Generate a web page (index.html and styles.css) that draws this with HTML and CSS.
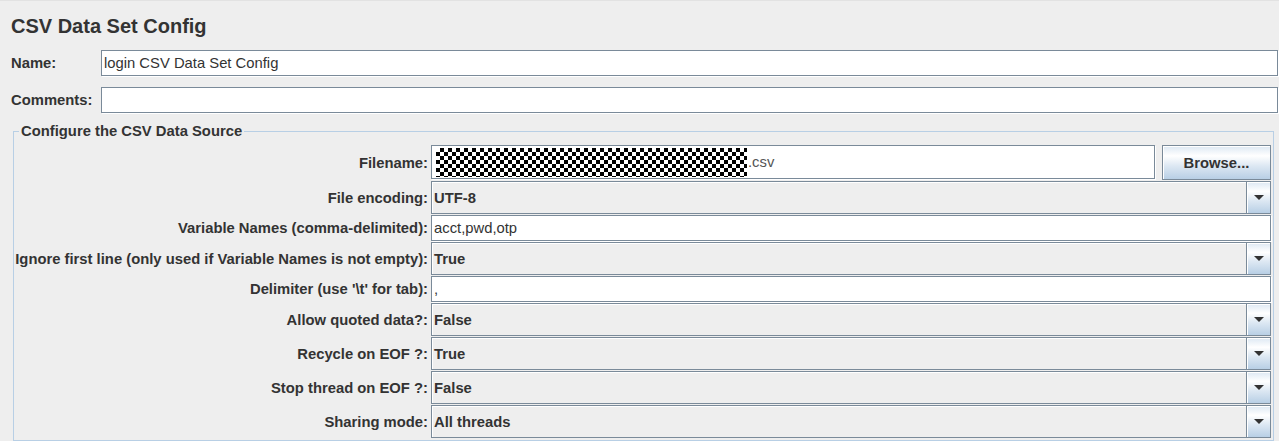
FILE: index.html
```html
<!DOCTYPE html>
<html>
<head>
<meta charset="utf-8">
<link rel="stylesheet" href="styles.css">
</head>
<body>
<div class="page">
  <h1 class="title">CSV Data Set Config</h1>
  <div class="toprow">
    <div class="toplabel">Name:</div>
    <div class="tf">login CSV Data Set Config</div>
  </div>
  <div class="toprow second">
    <div class="toplabel">Comments:</div>
    <div class="tf"></div>
  </div>
  <fieldset class="group">
    <legend class="legend">Configure the CSV Data Source</legend>
    <div class="form">
      <div class="lbl">Filename:</div>
      <div class="filerow">
        <div class="tf file"><span class="redact"></span><span>.csv</span></div>
        <div class="btn">Browse...</div>
      </div>

      <div class="lbl">File encoding:</div>
      <div class="combo"><span class="val">UTF-8</span><span class="arrow"><span class="tri"></span></span></div>

      <div class="lbl">Variable Names (comma-delimited):</div>
      <div class="tf small">acct,pwd,otp</div>

      <div class="lbl">Ignore first line (only used if Variable Names is not empty):</div>
      <div class="combo"><span class="val">True</span><span class="arrow"><span class="tri"></span></span></div>

      <div class="lbl">Delimiter (use '\t' for tab):</div>
      <div class="tf small">,</div>

      <div class="lbl">Allow quoted data?:</div>
      <div class="combo"><span class="val">False</span><span class="arrow"><span class="tri"></span></span></div>

      <div class="lbl">Recycle on EOF ?:</div>
      <div class="combo"><span class="val">True</span><span class="arrow"><span class="tri"></span></span></div>

      <div class="lbl">Stop thread on EOF ?:</div>
      <div class="combo"><span class="val">False</span><span class="arrow"><span class="tri"></span></span></div>

      <div class="lbl">Sharing mode:</div>
      <div class="combo"><span class="val">All threads</span><span class="arrow"><span class="tri"></span></span></div>
    </div>
  </fieldset>
</div>
</body>
</html>
```

FILE: styles.css
```css
html, body {
  margin: 0;
  padding: 0;
  height: 100%;
  overflow: hidden;
  background: #eeeeee;
}

.page {
  box-sizing: border-box;
  height: 441px;
  border-top: 1px solid #e2e2e2;
  padding: 0 1px 0 0;
  font-family: "Liberation Sans", Arial, sans-serif;
  font-size: 14.8px;
  color: #333333;
}

.title {
  margin: 14px 0 0 11px;
  font-size: 20px;
  line-height: 23px;
  font-weight: bold;
  color: #333333;
}

.toprow {
  display: flex;
  height: 26px;
  margin-top: 12px;
  padding-left: 11px;
}

.toprow.second {
  margin-top: 11px;
}

.toplabel {
  width: 90px;
  display: flex;
  align-items: center;
  font-weight: bold;
  white-space: nowrap;
}

.tf {
  box-sizing: border-box;
  flex: 1;
  display: flex;
  align-items: center;
  background: #ffffff;
  border: 1px solid #7a8a99;
  box-shadow: 1px 1px 0 #ffffff;
  padding-left: 2px;
  white-space: nowrap;
  overflow: hidden;
}

.group {
  margin: 10px 4px 0 13px;
  padding: 0 2px 2px 0;
  border: 1px solid #b8cfe5;
  min-width: 0;
}

.legend {
  margin-left: 5px;
  padding: 0 2px;
  font-weight: bold;
  line-height: 17px;
  white-space: nowrap;
}

.form {
  display: grid;
  grid-template-columns: 414px 1fr;
  grid-template-rows: 35px 33px 26px 33px 26px 33px 33px 33px 33px;
  column-gap: 3px;
  row-gap: 1px;
  padding-top: 5px;
}

.lbl {
  display: flex;
  align-items: center;
  justify-content: flex-end;
  font-weight: bold;
  white-space: nowrap;
}

.filerow {
  display: flex;
  gap: 7px;
  min-width: 0;
}

.tf.file {
  height: 34px;
  padding-left: 4px;
  color: #555555;
}

.redact {
  display: inline-block;
  flex: none;
  width: 311px;
  height: 29px;
  margin-right: 1px;
  background-color: #ffffff;
  background-image: conic-gradient(#000 25%, #fff 0 50%, #000 0 75%, #fff 0);
  background-size: 8px 8px;
}

.btn {
  box-sizing: border-box;
  width: 109px;
  height: 35px;
  display: flex;
  align-items: center;
  justify-content: center;
  font-weight: bold;
  border: 1px solid #7a8a99;
  box-shadow: inset 1px 1px 0 #ffffff;
  background: linear-gradient(#dde8f3 0%, #ffffff 30%, #dde8f3 60%, #b8cfe5 100%);
}

.combo {
  box-sizing: border-box;
  display: flex;
  align-items: stretch;
  border: 1px solid #7a8a99;
  box-shadow: inset 1px 1px 0 #ffffff;
  background: #eeeeee;
}

.val {
  flex: 1;
  display: flex;
  align-items: center;
  padding-left: 2px;
  font-weight: bold;
  white-space: nowrap;
}

.arrow {
  width: 23px;
  display: flex;
  align-items: center;
  justify-content: center;
  border-left: 1px solid #7a8a99;
  box-shadow: inset 1px 1px 0 #ffffff;
  background: linear-gradient(#dde8f3 0%, #ffffff 30%, #dde8f3 60%, #b8cfe5 100%);
}

.tri {
  width: 0;
  height: 0;
  border-left: 5px solid transparent;
  border-right: 5px solid transparent;
  border-top: 5px solid #333333;
}
```
